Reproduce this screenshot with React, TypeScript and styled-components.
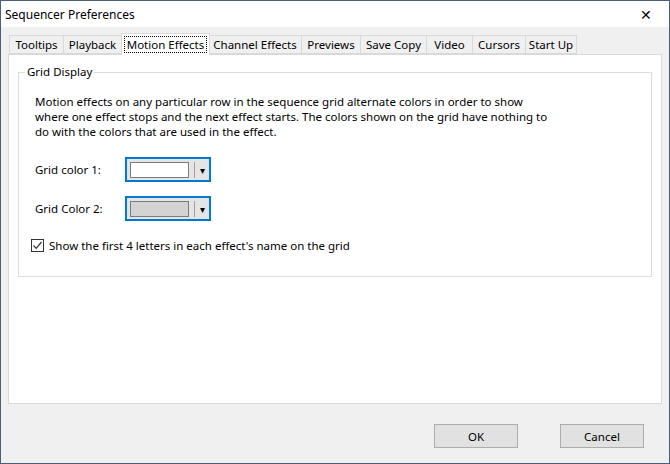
import * as React from "react";
import styled, { createGlobalStyle } from "styled-components";

const Global = createGlobalStyle`
  html, body { margin: 0; padding: 0; }
  body { font-family: "Noto Sans", "Open Sans", sans-serif; font-size: 11.5px; color: #000; }
`;

const tabs: [string, number][] = [
  ["Tooltips", 55], ["Playback", 59], ["Motion Effects", 89], ["Channel Effects", 94],
  ["Previews", 60], ["Save Copy", 67], ["Video", 47], ["Cursors", 54], ["Start Up", 52],
];

const App: React.FunctionComponent = () => (
  <Window>
    <Global />
    <TitleBar>
      <span>Sequencer Preferences</span>
      <Close>✕</Close>
    </TitleBar>
    <Body>
      <TabRow>
        {tabs.map(([t, w]) => (
          <Tab key={t} $active={t === "Motion Effects"} style={{ width: w }}>
            {t === "Motion Effects" ? <Focus>{t}</Focus> : t}
          </Tab>
        ))}
      </TabRow>
      <Panel>
        <Group>
          <Legend>Grid Display</Legend>
          <Text>
            Motion effects on any particular row in the sequence grid alternate colors in order to show
            where one effect stops and the next effect starts. The colors shown on the grid have
            nothing to do with the colors that are used in the effect.
          </Text>
          <ColorRow>
            <Label>Grid color 1:</Label>
            <Picker>
              <Swatch $color="#ffffff" />
              <Arrow>▾</Arrow>
            </Picker>
          </ColorRow>
          <ColorRow>
            <Label>Grid Color 2:</Label>
            <Picker>
              <Swatch $color="#d3d3d3" />
              <Arrow>▾</Arrow>
            </Picker>
          </ColorRow>
          <Check>
            <Box>
              <svg width="11" height="11" viewBox="0 0 11 11">
                <path d="M1.5 5.5 L4.2 8.3 L9.5 2" fill="none" stroke="#333" strokeWidth="1.2" />
              </svg>
            </Box>
            Show the first 4 letters in each effect's name on the grid
          </Check>
        </Group>
      </Panel>
      <Footer>
        <Button>OK</Button>
        <Button>Cancel</Button>
      </Footer>
    </Body>
  </Window>
);

export default App;

const Window = styled.div`
  width: 670px;
  height: 464px;
  box-sizing: border-box;
  border: 1px solid #4a5f7e;
  background: #f0f0f0;
  display: flex;
  flex-direction: column;
`;

const TitleBar = styled.div`
  height: 26px;
  background: #fff;
  display: flex;
  align-items: center;
  justify-content: space-between;
  padding: 0 0 0 4px;
  font-size: 12px;
`;

const Close = styled.span`
  width: 46px;
  text-align: center;
  font-size: 14px;
`;

const Body = styled.div`
  flex: 1;
  display: flex;
  flex-direction: column;
  padding: 7px 7px 0 7px;
`;

const TabRow = styled.div`
  display: flex;
  align-items: flex-end;
  height: 20px;
  padding-left: 2px;
`;

const Tab = styled.div<{ $active: boolean }>`
  box-sizing: border-box;
  height: ${p => (p.$active ? "22px" : "19px")};
  margin: ${p => (p.$active ? "0 -1px -1px -1px" : "0")};
  background: ${p => (p.$active ? "#fff" : "#f0f0f0")};
  border: 1px solid #d9d9d9;
  border-bottom: ${p => (p.$active ? "none" : "1px solid #d9d9d9")};
  display: flex;
  align-items: center;
  justify-content: center;
  position: relative;
  z-index: ${p => (p.$active ? 1 : 0)};
  margin-left: -1px;
`;

const Focus = styled.span`
  border: 1px dotted #000;
  padding: 0 2px;
  line-height: 15px;
`;

const Panel = styled.div`
  box-sizing: border-box;
  height: 350px;
  background: #fff;
  border: 1px solid #d9d9d9;
  padding: 17px 9px 0 9px;
`;

const Group = styled.div`
  position: relative;
  border: 1px solid #dcdcdc;
  height: 205px;
  box-sizing: border-box;
  padding: 21px 16px 0 16px;
`;

const Legend = styled.span`
  position: absolute;
  top: -9px;
  left: 6px;
  background: #fff;
  padding: 0 2px;
`;

const Text = styled.div`
  line-height: 15px;
  width: 520px;
  margin-bottom: 18px;
`;

const ColorRow = styled.div`
  display: flex;
  align-items: center;
  height: 25px;
  margin-bottom: 14px;
`;

const Label = styled.span`
  width: 90px;
`;

const Picker = styled.div`
  box-sizing: border-box;
  width: 86px;
  height: 25px;
  border: 2px solid #0078d7;
  background: #e5e5e5;
  display: flex;
  align-items: center;
  padding-left: 3px;
`;

const Swatch = styled.div<{ $color: string }>`
  width: 57px;
  height: 14px;
  background: ${p => p.$color};
  border: 1px solid #7a7a7a;
`;

const Arrow = styled.span`
  border-left: 1px solid #a0a0a0;
  margin-left: 5px;
  height: 16px;
  width: 14px;
  text-align: center;
  font-size: 10px;
  line-height: 16px;
`;

const Check = styled.div`
  display: flex;
  align-items: center;
  gap: 5px;
  margin-left: -4px;
  margin-top: 17px;
`;

const Box = styled.span`
  width: 13px;
  height: 13px;
  box-sizing: border-box;
  border: 1px solid #333;
  background: #fff;
  display: flex;
  align-items: center;
  justify-content: center;
`;

const Footer = styled.div`
  display: flex;
  justify-content: flex-end;
  gap: 42px;
  padding: 20px 18px 0 0;
`;

const Button = styled.div`
  width: 84px;
  height: 24px;
  box-sizing: border-box;
  border: 1px solid #adadad;
  background: #e1e1e1;
  display: flex;
  align-items: center;
  justify-content: center;
`;
